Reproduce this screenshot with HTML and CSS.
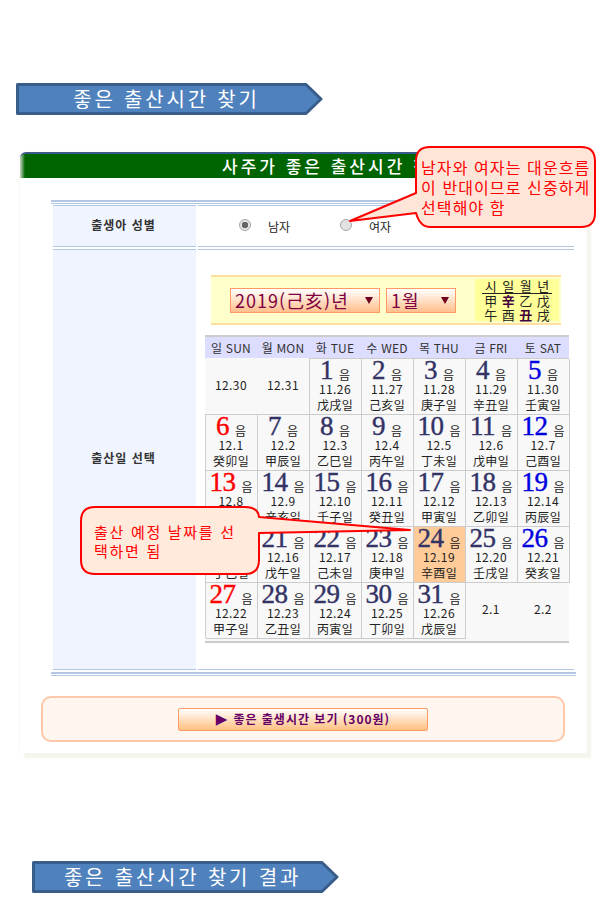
FILE: index.html
```html
<!DOCTYPE html>
<html lang="ko">
<head>
<meta charset="utf-8">
<title>좋은 출산시간 찾기</title>
<link rel="stylesheet" href="styles.css">
</head>
<body>
<div class="page">
  <div class="banner banner-top">
    <svg class="banner-shape" width="307" height="32" viewBox="0 0 307 32"><polygon points="1.5,1.5 290,1.5 305,16 290,30.5 1.5,30.5" fill="#4f81bd" stroke="#385d8a" stroke-width="3" stroke-linejoin="round"/></svg>
    <span class="banner-text">좋은 출산시간 찾기</span>
  </div>

  <section class="panel">
    <h2 class="panel-title">사주가 좋은 출산시간 찾기</h2>
    <div class="form">
      <div class="dbl"></div>
      <div class="row row-gender">
        <div class="label">출생아 성별</div>
        <div class="value gender">
          <span class="option"><span class="radio radio-on"></span><span>남자</span></span>
          <span class="option"><span class="radio"></span><span>여자</span></span>
        </div>
      </div>
      <div class="row row-date">
        <div class="label">출산일 선택</div>
        <div class="value date">
          <div class="picker">
            <div class="select select-year"><span>2019(己亥)년</span><span class="caret"></span></div>
            <div class="select select-month"><span>1월</span><span class="caret"></span></div>
            <div class="ganji-box">
              <span class="gh">시</span><span class="gh">일</span><span class="gh">월</span><span class="gh">년</span>
              <span>甲</span><span class="gb">辛</span><span>乙</span><span>戊</span>
              <span>午</span><span>酉</span><span class="gb">丑</span><span>戌</span>
            </div>
          </div>
          <div class="cal">
            <div class="dow">일 SUN</div><div class="dow">월 MON</div><div class="dow">화 TUE</div><div class="dow">수 WED</div><div class="dow">목 THU</div><div class="dow">금 FRI</div><div class="dow">토 SAT</div>

            <div class="off">12.30</div>
            <div class="off">12.31</div>
            <div class="day"><div class="top"><b>1</b><i>음</i></div><div>11.26</div><div>戊戌일</div></div>
            <div class="day"><div class="top"><b>2</b><i>음</i></div><div>11.27</div><div>己亥일</div></div>
            <div class="day"><div class="top"><b>3</b><i>음</i></div><div>11.28</div><div>庚子일</div></div>
            <div class="day"><div class="top"><b>4</b><i>음</i></div><div>11.29</div><div>辛丑일</div></div>
            <div class="day sat"><div class="top"><b>5</b><i>음</i></div><div>11.30</div><div>壬寅일</div></div>

            <div class="day sun"><div class="top"><b>6</b><i>음</i></div><div>12.1</div><div>癸卯일</div></div>
            <div class="day"><div class="top"><b>7</b><i>음</i></div><div>12.2</div><div>甲辰일</div></div>
            <div class="day"><div class="top"><b>8</b><i>음</i></div><div>12.3</div><div>乙巳일</div></div>
            <div class="day"><div class="top"><b>9</b><i>음</i></div><div>12.4</div><div>丙午일</div></div>
            <div class="day"><div class="top"><b>10</b><i>음</i></div><div>12.5</div><div>丁未일</div></div>
            <div class="day"><div class="top"><b>11</b><i>음</i></div><div>12.6</div><div>戊申일</div></div>
            <div class="day sat"><div class="top"><b>12</b><i>음</i></div><div>12.7</div><div>己酉일</div></div>

            <div class="day sun"><div class="top"><b>13</b><i>음</i></div><div>12.8</div><div>庚戌일</div></div>
            <div class="day"><div class="top"><b>14</b><i>음</i></div><div>12.9</div><div>辛亥일</div></div>
            <div class="day"><div class="top"><b>15</b><i>음</i></div><div>12.10</div><div>壬子일</div></div>
            <div class="day"><div class="top"><b>16</b><i>음</i></div><div>12.11</div><div>癸丑일</div></div>
            <div class="day"><div class="top"><b>17</b><i>음</i></div><div>12.12</div><div>甲寅일</div></div>
            <div class="day"><div class="top"><b>18</b><i>음</i></div><div>12.13</div><div>乙卯일</div></div>
            <div class="day sat"><div class="top"><b>19</b><i>음</i></div><div>12.14</div><div>丙辰일</div></div>

            <div class="day sun"><div class="top"><b>20</b><i>음</i></div><div>12.15</div><div>丁巳일</div></div>
            <div class="day"><div class="top"><b>21</b><i>음</i></div><div>12.16</div><div>戊午일</div></div>
            <div class="day"><div class="top"><b>22</b><i>음</i></div><div>12.17</div><div>己未일</div></div>
            <div class="day"><div class="top"><b>23</b><i>음</i></div><div>12.18</div><div>庚申일</div></div>
            <div class="day picked"><div class="top"><b>24</b><i>음</i></div><div>12.19</div><div>辛酉일</div></div>
            <div class="day"><div class="top"><b>25</b><i>음</i></div><div>12.20</div><div>壬戌일</div></div>
            <div class="day sat"><div class="top"><b>26</b><i>음</i></div><div>12.21</div><div>癸亥일</div></div>

            <div class="day sun"><div class="top"><b>27</b><i>음</i></div><div>12.22</div><div>甲子일</div></div>
            <div class="day"><div class="top"><b>28</b><i>음</i></div><div>12.23</div><div>乙丑일</div></div>
            <div class="day"><div class="top"><b>29</b><i>음</i></div><div>12.24</div><div>丙寅일</div></div>
            <div class="day"><div class="top"><b>30</b><i>음</i></div><div>12.25</div><div>丁卯일</div></div>
            <div class="day"><div class="top"><b>31</b><i>음</i></div><div>12.26</div><div>戊辰일</div></div>
            <div class="off">2.1</div>
            <div class="off">2.2</div>
          </div>
        </div>
      </div>
      <div class="dbl dbl-end"></div>
    </div>
    <div class="action">
      <button class="go" type="button"><span class="go-arrow">▶</span>좋은 출생시간 보기 (300원)</button>
    </div>
  </section>

  <div class="banner banner-bottom">
    <svg class="banner-shape" width="307" height="32" viewBox="0 0 307 32"><polygon points="1.5,1.5 290,1.5 305,16 290,30.5 1.5,30.5" fill="#4f81bd" stroke="#385d8a" stroke-width="3" stroke-linejoin="round"/></svg>
    <span class="banner-text">좋은 출산시간 찾기 결과</span>
  </div>

  <div class="callout callout-gender">
    <svg class="callout-shape" width="262" height="90" viewBox="0 0 262 90"><path d="M95 1H246Q260 1 260 15V67Q260 81 246 81H95Q85 81 81 67L15 75L81 47V15Q81 1 95 1Z" fill="#fee5d8" stroke="#ff0000" stroke-width="2" stroke-linejoin="round"/></svg>
    <p class="callout-text">남자와 여자는 대운흐름<br>이 반대이므로 신중하게<br>선택해야 함</p>
  </div>

  <div class="callout callout-date">
    <svg class="callout-shape" width="345" height="72" viewBox="0 0 345 72"><path d="M15 1H165Q178 1 179 11L330 24L179 27V54Q179 68 165 68H15Q1 68 1 54V15Q1 1 15 1Z" fill="#ffeadb" stroke="#ff0000" stroke-width="2" stroke-linejoin="round"/></svg>
    <p class="callout-text">출산 예정 날짜를 선<br>택하면 됨</p>
  </div>
</div>
</body>
</html>
```
FILE: styles.css
```css
* { box-sizing: border-box; }
html, body { margin: 0; padding: 0; background: #fff; }
body { font-family: "Noto Sans CJK KR", "Liberation Sans", sans-serif; font-size: 12px; color: #222; }
.page { position: relative; width: 612px; height: 907px; overflow: hidden; padding-top: 83px; }

.banner { position: relative; width: 307px; height: 32px; display: flex; align-items: center; justify-content: center; padding-right: 6px; }
.banner-top { margin-left: 16px; }
.banner-bottom { margin: 108px 0 0 32px; }
.banner-shape { position: absolute; left: 0; top: 0; }
.banner-text { position: relative; color: #fff; font-size: 20px; letter-spacing: 2.8px; line-height: 1; }

.panel { margin: 37px 0 0 20px; width: 567px; height: 601px; box-shadow: 4px 5px 2px #f5f5ee, -1px 0 2px #f7f7f2; }
.panel-title { margin: 0; height: 26px; padding-left: 202px; background: linear-gradient(90deg, #c8d8c8, #006400 5px); border-top: 2px solid #3a5a8a; border-radius: 6px 0 0 0; color: #fff; font-size: 17px; font-weight: 500; line-height: 23px; letter-spacing: 3px; white-space: nowrap; }

.form { margin: 22px 0 0 31px; width: 525px; }
.dbl { height: 4px; border-top: 2px solid #b3c7e3; border-bottom: 1px solid #b3c7e3; }
.dbl-end { margin-top: 2px; }
.row { display: grid; grid-template-columns: 143px 376px; column-gap: 2px; margin: 1px 0 0 2px; }
.row-date { margin-top: 2px; }
.row-gender { height: 42px; }
.row-date { height: 421px; }
.label { display: flex; align-items: center; justify-content: center; background: #eff4fe; border-top: 1px solid #b3c7e3; border-bottom: 1px solid #b3c7e3; font-weight: 700; font-size: 12px; letter-spacing: 1px; color: #333; padding: 0 2px 4px 0; }
.value { border-top: 1px solid #b3c7e3; border-bottom: 1px solid #b3c7e3; }

.gender { display: flex; align-items: center; padding-left: 41px; }
.option { display: flex; align-items: center; gap: 17px; width: 101px; font-size: 12px; line-height: 1; padding-top: 1px; }
.radio { width: 12px; height: 12px; margin-top: -4px; border-radius: 50%; border: 1px solid #a8a8a8; background: #e2e2e2; flex: none; }
.radio-on { background: radial-gradient(circle, #666 0, #666 3px, #e4e4e4 3.5px); }

.date { padding: 25px 0 0 7px; }
.picker { display: flex; align-items: center; width: 350px; height: 50px; margin-left: 6px; padding: 0 2px 0 19px; background: #ffffcc; border-top: 2px solid #ffe0a0; border-bottom: 2px solid #ffe0a0; }
.select { display: flex; align-items: center; justify-content: space-between; height: 25px; padding: 0 6px 0 4px; background: linear-gradient(#fff, #ffbf8c); border: 1px solid #ff9966; color: #800040; font-size: 18px; letter-spacing: 1px; line-height: 1; white-space: nowrap; }
.select-year { width: 150px; }
.select-month { width: 70px; margin-left: 6px; }
.caret { width: 0; height: 0; border-left: 4px solid transparent; border-right: 4px solid transparent; border-top: 7px solid #700020; }
.ganji-box { display: grid; grid-template-columns: repeat(4, 1fr); width: 84px; height: 42px; margin-left: 19px; padding: 0 7px; background: #ffff99; font-size: 13px; line-height: 14px; text-align: center; color: #222; }
.gh { border-bottom: 1px solid #222; }
.gb { font-weight: 700; color: #400040; }

.cal { display: grid; grid-template-columns: repeat(7, 52px); grid-template-rows: 21px repeat(5, 56px); width: 364px; height: 308px; margin-top: 10px; background: #f8f8f8; border-top: 2px solid #ccc; border-bottom: 2px solid #ccc; font-size: 12px; line-height: 16px; text-align: center; letter-spacing: 0.4px; }
.dow { background: #ddddff; line-height: 21px; color: #333; letter-spacing: 0.2px; }
.off { display: flex; align-items: center; justify-content: center; padding-bottom: 2px; }
.day { box-shadow: inset 1px 1px 0 #ccc, 1px 1px 0 #ccc; }
.day > div:nth-child(2) { margin-top: -1px; }
.top { display: flex; align-items: flex-end; justify-content: center; gap: 6px; height: 24px; }
.top b { font-family: "Liberation Serif", serif; font-size: 27px; font-weight: 400; line-height: 24px; letter-spacing: -0.5px; color: #333366; -webkit-text-stroke: 0.4px currentColor; }
.top i { font-style: normal; font-size: 12px; line-height: 15px; letter-spacing: 0; }
.sun .top b { color: #ff0000; }
.sat .top b { color: #0000e0; }
.picked { background: #ffcc99; }

.action { display: flex; align-items: center; justify-content: center; width: 524px; height: 46px; margin: 20px 0 0 21px; background: #fff6f0; border: 2px solid #ffc8a8; border-radius: 10px; }
.go { display: flex; align-items: center; justify-content: center; width: 250px; height: 23px; padding: 0; background: linear-gradient(#fff, #ffc080); border: 1px solid #ff9966; border-radius: 2px; font-family: inherit; font-size: 12px; font-weight: 700; color: #660066; letter-spacing: 1px; line-height: 1; }
.go-arrow { font-size: 15px; margin-right: 5px; font-family: "DejaVu Sans", sans-serif; }

.callout { position: absolute; }
.callout-shape { position: absolute; left: 0; top: 0; }
.callout-text { position: relative; margin: 0; color: #ff0000; white-space: nowrap; }
.callout-gender { left: 335px; top: 146px; width: 262px; height: 90px; }
.callout-gender .callout-text { padding: 11px 0 0 86px; font-size: 16px; line-height: 20px; letter-spacing: 1.1px; }
.callout-date { left: 80px; top: 506px; width: 345px; height: 72px; }
.callout-date .callout-text { padding: 16px 0 0 14px; font-size: 15px; line-height: 19px; letter-spacing: 1.7px; }
```
